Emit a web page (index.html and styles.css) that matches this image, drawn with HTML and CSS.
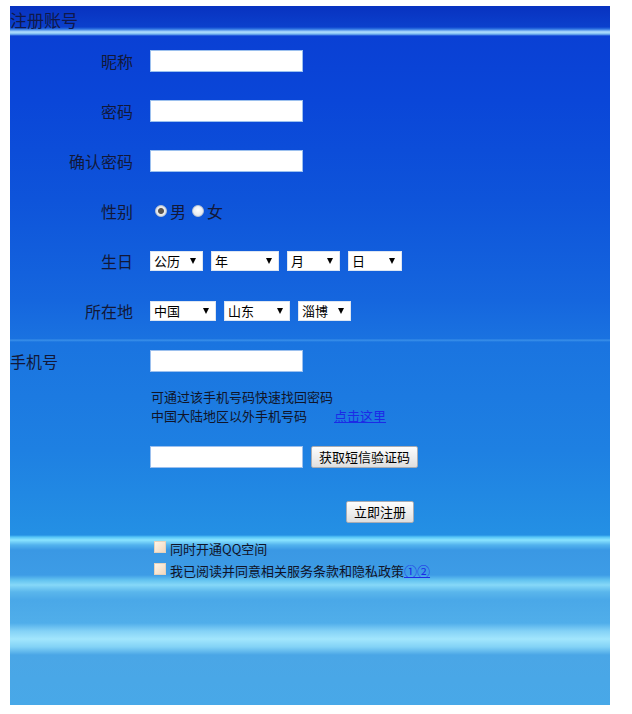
FILE: index.html
```html
<!DOCTYPE html>
<html lang="zh-CN">
<head>
<meta charset="utf-8">
<title>注册账号</title>
<link rel="stylesheet" href="styles.css">
</head>
<body>
<div class="panel">
  <div class="header">注册账号</div>
  <div class="row"><label class="lbl">昵称</label><div class="field"><input class="txt" type="text"></div></div>
  <div class="row"><label class="lbl">密码</label><div class="field"><input class="txt" type="password"></div></div>
  <div class="row"><label class="lbl">确认密码</label><div class="field"><input class="txt" type="password"></div></div>
  <div class="row"><label class="lbl">性别</label>
    <div class="field radios">
      <input class="radio" type="radio" name="sex" checked><span class="rtext">男</span>
      <input class="radio r2" type="radio" name="sex"><span class="rtext">女</span>
    </div>
  </div>
  <div class="row"><label class="lbl">生日</label>
    <div class="field selects">
      <span class="sel"><select class="w53"><option>公历</option></select></span>
      <span class="sel"><select class="w68"><option>年</option></select></span>
      <span class="sel"><select class="w53"><option>月</option></select></span>
      <span class="sel"><select class="w54"><option>日</option></select></span>
    </div>
  </div>
  <div class="row"><label class="lbl">所在地</label>
    <div class="field selects">
      <span class="sel"><select class="w66"><option>中国</option></select></span>
      <span class="sel"><select class="w66"><option>山东</option></select></span>
      <span class="sel"><select class="w53"><option>淄博</option></select></span>
    </div>
  </div>
  <div class="row"><label class="lbl left">手机号</label><div class="field"><input class="txt" type="text"></div></div>
  <div class="hint">
    <div>可通过该手机号码快速找回密码</div>
    <div>中国大陆地区以外手机号码<a class="link here" href="#">点击这里</a></div>
  </div>
  <div class="sms">
    <input class="txt" type="text"><button class="btn" type="button">获取短信验证码</button>
  </div>
  <div class="submit"><button class="btn" type="button">立即注册</button></div>
  <div class="checks">
    <div class="check"><input class="cb" type="checkbox"><span>同时开通QQ空间</span></div>
    <div class="check"><input class="cb" type="checkbox"><span>我已阅读并同意相关服务条款和隐私政策<a class="link" href="#">①②</a></span></div>
  </div>
</div>
</body>
</html>
```
FILE: styles.css
```css
html, body {
  background: #ffffff;
}
body {
  margin: 6px 10px;
  font-family: "Noto Sans CJK SC", "Noto Sans", sans-serif;
  color: #121838;
}
.panel {
  width: 600px;
  height: 699px;
  background: linear-gradient(to bottom,
    #0832c0 0px, #0b40cc 21px, #2a70e0 23px, #b4e2ff 26px, #7cbcf2 28px, #0a40d4 30px,
    #0a46d8 94px, #0e54da 194px, #1566de 294px, #1a72e0 333px, #3c92ea 334px, #1a74e0 336px,
    #1e80e2 444px, #2490e4 529px, #54c4f6 531px, #8ae4ff 534px, #52b2ee 539px, #3a98e4 544px,
    #3d9ce6 569px, #62c2f0 574px, #86d8f8 579px, #5ab6ec 586px, #4aa8e8 594px,
    #50aeea 617px, #84d2f6 625px, #a2e6fd 633px, #82d2f6 641px, #4aa6e6 649px, #48a8e8 699px);
}
.header {
  height: 30px;
  line-height: 28px;
  font-size: 17px;
  color: #10184a;
}
.row {
  display: grid;
  grid-template-columns: 123px 1fr;
  column-gap: 17px;
  height: 50px;
  align-items: center;
}
.lbl {
  font-size: 16px;
  text-align: right;
  line-height: 20px;
}
.lbl.left {
  text-align: left;
}
.field {
  display: flex;
  align-items: center;
}
.txt {
  box-sizing: border-box;
  width: 153px;
  height: 22px;
  margin: 0;
  padding: 0 3px;
  border: 1px solid #9cc0ee;
  background: #ffffff;
  font: 13px "Noto Sans CJK SC", sans-serif;
}
.radios {
  font-size: 16px;
}
.radio {
  appearance: none;
  -webkit-appearance: none;
  box-sizing: border-box;
  width: 12px;
  height: 12px;
  margin: 0 3px 0 5px;
  border-radius: 50%;
  border: 1px solid #b8c4d4;
  background: radial-gradient(circle at 50% 40%, #ffffff 0, #e6e9ee 70%, #d4d9e0 100%);
}
.radio:checked {
  background: radial-gradient(circle, #5a5450 0, #5a5450 2.5px, #e9eaec 3.5px, #dfe2e6 100%);
}
.radio.r2 {
  margin-left: 6px;
}
.rtext {
  line-height: 20px;
}
.selects {
  gap: 8px;
}
.sel {
  position: relative;
  display: inline-block;
}
.sel::after {
  content: "";
  position: absolute;
  right: 7px;
  top: 7px;
  border-left: 3.5px solid transparent;
  border-right: 3.5px solid transparent;
  border-top: 6px solid #000;
  pointer-events: none;
}
.sel select {
  appearance: none;
  -webkit-appearance: none;
  box-sizing: border-box;
  height: 20px;
  margin: 0;
  padding: 0 0 0 3px;
  border: 1px solid #dde6f2;
  border-radius: 0;
  background: #ffffff;
  color: #000;
  font: 13px/18px "Noto Sans CJK SC", sans-serif;
  display: block;
}
.w53 { width: 53px; }
.w54 { width: 54px; }
.w66 { width: 66px; }
.w68 { width: 68px; }
.hint {
  margin-top: 1px;
  padding-left: 141px;
  font-size: 13px;
  line-height: 19px;
  color: #101428;
}
.link {
  color: #1c2ae6;
  text-decoration: underline;
}
.here {
  margin-left: 27px;
}
.sms {
  margin-top: 21px;
  padding-left: 140px;
  display: flex;
  align-items: center;
  gap: 8px;
}
.btn {
  box-sizing: border-box;
  height: 22px;
  margin: 0;
  padding: 0 7px;
  border: 1px solid #a8acb4;
  border-radius: 2px;
  background: linear-gradient(to bottom, #fdfdfd, #ececec 60%, #dedede);
  color: #000;
  font: 13px/18px "Noto Sans CJK SC", sans-serif;
}
.submit {
  margin-top: 33px;
  padding-left: 336px;
  display: flex;
}
.checks {
  margin-top: 14px;
  padding-left: 144px;
  font-size: 13px;
  color: #101428;
}
.check {
  height: 22px;
  display: flex;
  align-items: center;
}
.cb {
  appearance: none;
  -webkit-appearance: none;
  box-sizing: border-box;
  width: 12px;
  height: 12px;
  margin: 0 4px 3px 0;
  border: 1px solid #e6d2bc;
  background: linear-gradient(135deg, #fff4e6, #f0d8c0);
}
```
